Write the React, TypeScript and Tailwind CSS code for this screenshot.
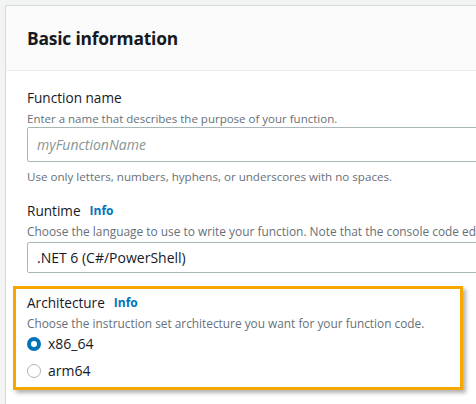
import React from 'react';

function Radio({ checked, label }: { checked: boolean; label: string }) {
  return (
    <div className="flex items-center h-5 gap-[7px]">
      <span
        className={
          checked
            ? 'w-[14px] h-[14px] rounded-full border-[4px] border-[#0073bb] bg-white'
            : 'w-[14px] h-[14px] rounded-full border-[1.5px] border-[#aab7b8] bg-white'
        }
      ></span>
      <span className="text-[14px] leading-5 text-[#16191f]">{label}</span>
    </div>
  );
}

export default function App() {
  return (
    <div className="w-[476px] h-[404px] overflow-hidden bg-[#f2f3f3] pt-[5px] pl-[5px] font-['Open_Sans',sans-serif]">
      <div className="w-[600px] h-[420px] bg-white border-l border-t border-[#d5dbdb]">
        {/* Header */}
        <div className="h-[65px] bg-[#fafafa] border-b border-[#eaeded] flex items-center pl-[21px]">
          <h2 className="text-[17.4px] font-bold text-[#16191f] tracking-[-0.2px]">Basic information</h2>
        </div>

        <div className="pt-[17px] pl-[21px]">
          {/* Function name */}
          <div className="text-[13.6px] leading-5 text-[#16191f]">Function name</div>
          <div className="mt-[3px] text-[11.5px] leading-4 text-[#687078]">
            Enter a name that describes the purpose of your function.
          </div>
          <div className="w-[520px] h-[35px] border border-[#aab7b8] rounded-[2px] flex items-center pl-[9px]">
            <span className="text-[14px] italic text-[#879596]">myFunctionName</span>
          </div>
          <div className="mt-[7px] text-[11.6px] leading-4 text-[#687078]">
            Use only letters, numbers, hyphens, or underscores with no spaces.
          </div>

          {/* Runtime */}
          <div className="mt-[16px] flex items-center gap-[9px] text-[13.6px] leading-5">
            <span className="text-[#16191f]">Runtime</span>
            <span className="text-[12px] font-bold text-[#0073bb]">Info</span>
          </div>
          <div className="mt-[2px] text-[11.9px] leading-4 text-[#687078] whitespace-nowrap">
            Choose the language to use to write your function. Note that the console code editor
          </div>
          <div className="mt-[3px] w-[520px] h-[31px] border border-[#aab7b8] rounded-[2px] flex items-center pl-[9px]">
            <span className="text-[14px] text-[#16191f]">.NET 6 (C#/PowerShell)</span>
          </div>
        </div>

        {/* Architecture (highlighted) */}
        <div className="mt-[13px] ml-[7px] w-[450px] border-[3px] border-[#f7a800] shadow-[3px_3px_4px_rgba(0,0,0,0.3)] pt-[4px] pb-[6px] pl-[11px]">
          <div className="flex items-center gap-[9px] text-[13.6px] leading-5">
            <span className="text-[#16191f]">Architecture</span>
            <span className="text-[12px] font-bold text-[#0073bb]">Info</span>
          </div>
          <div className="mt-[2px] text-[11.85px] leading-4 text-[#687078]">
            Choose the instruction set architecture you want for your function code.
          </div>
          <div className="mt-[3px] flex flex-col gap-[7px]">
            <Radio checked label="x86_64" />
            <Radio checked={false} label="arm64" />
          </div>
        </div>
      </div>
    </div>
  );
}
